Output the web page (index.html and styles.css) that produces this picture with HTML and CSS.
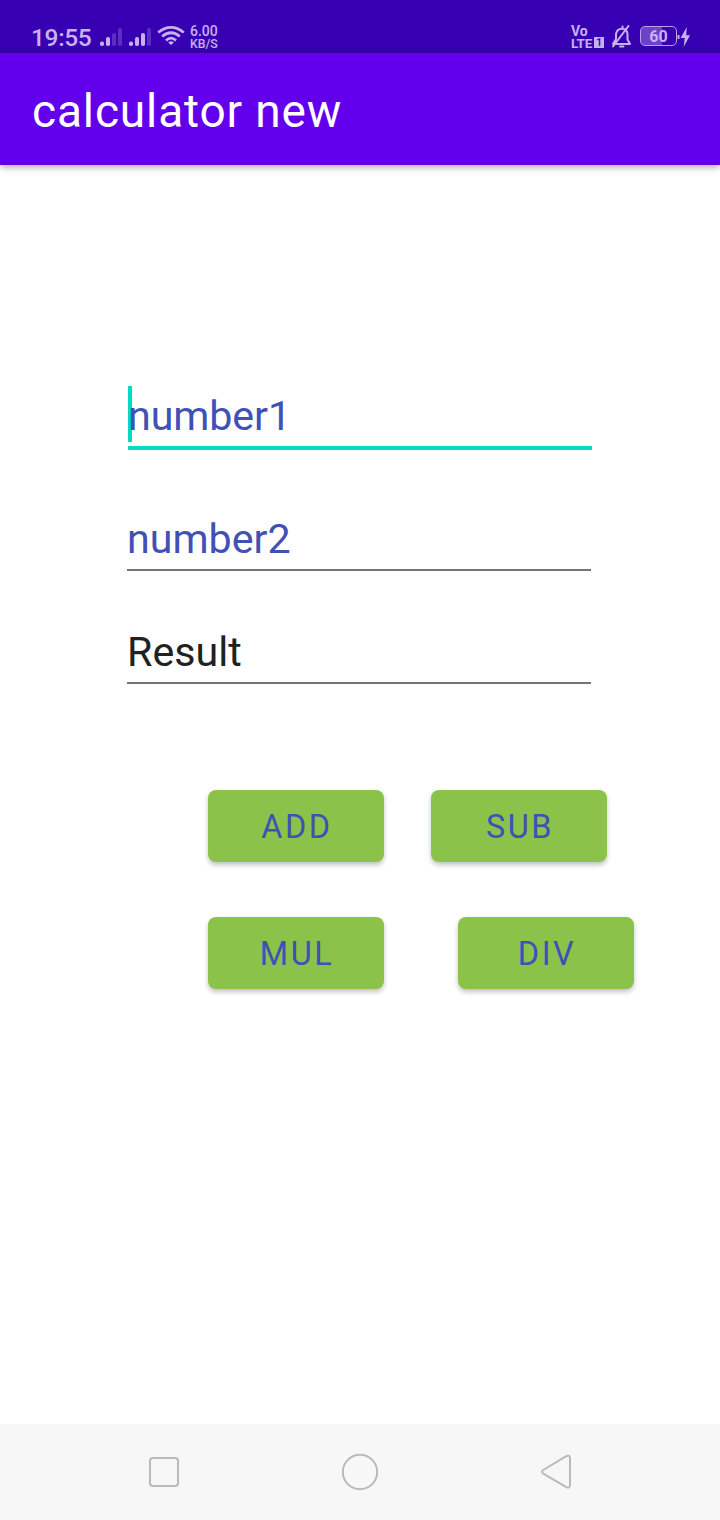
FILE: index.html
```html
<!DOCTYPE html>
<html lang="en">
<head>
<meta charset="utf-8">
<title>calculator new</title>
<link rel="stylesheet" href="styles.css">
</head>
<body>
<div class="screen">
  <header class="status">
    <span class="clock">19:55</span>
    <svg class="signal" width="23" height="19" viewBox="0 0 23 19" fill="currentColor">
      <rect x="0" y="13.5" width="4" height="4.5" rx="1.8"/><rect x="6" y="9" width="4" height="9" rx="1.8"/>
      <g opacity=".25"><rect x="12" y="5" width="4" height="13" rx="1.8"/><rect x="18" y="0" width="4" height="18" rx="1.8"/></g>
    </svg>
    <svg class="signal second" width="23" height="19" viewBox="0 0 23 19" fill="currentColor">
      <rect x="0" y="13.5" width="4" height="4.5" rx="1.8"/><rect x="6" y="9" width="4" height="9" rx="1.8"/><rect x="12" y="5" width="4" height="13" rx="1.8"/>
      <rect x="18" y="0" width="4" height="18" rx="1.8" opacity=".25"/>
    </svg>
    <svg class="wifi" width="28" height="20" viewBox="0 0 28 20" fill="none" stroke="currentColor" stroke-width="2.7">
      <path d="M1.2 6.5Q14-3.7 26.8 6.5M5.2 10.5Q14 3 22.8 10.5M9 14.4Q14 10 19 14.4"/>
      <path d="M11.2 16.4Q14 13.9 16.8 16.4L14 19Z" fill="currentColor" stroke="none"/>
    </svg>
    <span class="speed"><b>6.00</b><b class="unit">KB/S</b></span>
    <span class="volte"><b>Vo</b><span class="lte"><b>LTE</b><span class="sim">1</span></span></span>
    <svg class="bell" width="21" height="23" viewBox="0 0 21 23" fill="none" stroke="currentColor" stroke-width="2" stroke-linejoin="round" stroke-linecap="round">
      <path d="M11.5 1.5V3.5M2 19H19L16.5 14.5V9Q16 3.8 11 3.8T5 9V14ZM9 21.5H12.5M17.5 1L2 21.5"/>
    </svg>
    <span class="battery">60</span>
    <svg class="bolt" width="14" height="20" viewBox="0 0 14 20" fill="currentColor">
      <rect x="0.5" y="8" width="2" height="4"/><path d="M9.8 0L3.6 11H7.7L6.7 20L13 8.3H9.2Z"/>
    </svg>
  </header>
  <h1 class="appbar">calculator new</h1>
  <main class="content">
    <div class="field focused"><span class="caret"></span>number1</div>
    <div class="field second-field">number2</div>
    <div class="field result">Result</div>
    <div class="row"><button class="btn">ADD</button><button class="btn">SUB</button></div>
    <div class="row wide"><button class="btn">MUL</button><button class="btn">DIV</button></div>
  </main>
  <nav class="nav">
    <svg width="32" height="32" viewBox="0 0 32 32"><rect x="2" y="2" width="28" height="28" rx="3"/></svg>
    <svg width="38" height="38" viewBox="0 0 38 38"><circle cx="19" cy="19" r="17.2"/></svg>
    <svg width="34" height="38" viewBox="0 0 34 38"><path d="M4.3 17L27.2 3.2Q31 1.6 31 5V32Q31 35.8 27.2 34.2L4.3 20.6Q1.7 18.8 4.3 17Z"/></svg>
  </nav>
</div>
</body>
</html>
```
FILE: styles.css
```css
* { box-sizing: border-box; }
body { margin: 0; background: #fff; font-family: Roboto, sans-serif; }
.screen { width: 720px; height: 1520px; display: flex; flex-direction: column; }
.status { height: 53px; background: #3700b3; color: #c8b2ee; display: flex; align-items: flex-start; padding-left: 31px; flex: none; }
.status svg { flex: none; }
.clock { width: 69px; font-size: 24.5px; font-weight: 500; line-height: 30px; margin-top: 23px; letter-spacing: -.35px; }
.signal { margin-top: 28px; }
.second { margin-left: 6px; }
.wifi { margin: 26px 0 0 5px; }
.speed { display: flex; flex-direction: column; width: 60px; margin: 25px 0 0 5px; font-size: 14px; line-height: 13px; }
.speed b { font-weight: 500; }
.speed .unit { font-size: 12.3px; }
.volte { display: flex; flex-direction: column; margin: 25px 0 0 auto; width: 34px; font-size: 14px; line-height: 12px; }
.lte { display: flex; font-size: 13.5px; letter-spacing: -.2px; }
.lte b { width: 23px; line-height: 12px; }
.sim { width: 10px; height: 11px; background: currentColor; font-size: 10px; font-weight: 700; letter-spacing: 0; line-height: 11px; text-align: center; -webkit-text-fill-color: #3700b3; }
.bell { margin: 25px 0 0 6px; }
.battery { margin: 26px 0 0 8px; width: 37px; height: 20px; border: 1.5px solid #b9a0e8; border-radius: 5px; font-size: 16px; font-weight: 700; line-height: 20px; text-align: center; background: linear-gradient(90deg, #6a43c8 60%, transparent 60%); }
.bolt { margin: 27px 29px 0 0; }
.appbar { margin: 0; height: 112px; flex: none; background: #6200ee; color: #fff; font-size: 46px; font-weight: 400; line-height: 54px; padding: 31px 0 0 32px; letter-spacing: .87px; box-shadow: 0 2px 7px rgba(0,0,0,.35); }
.content { flex: 1; padding-top: 221px; }
.field { width: 464px; margin-left: 127px; font-size: 41.2px; line-height: 56px; color: #3f51b5; border-bottom: 2px solid #757575; white-space: nowrap; }
.focused { position: relative; height: 64px; margin-left: 128px; padding-top: 2px; border-bottom: 4px solid #03dac5; letter-spacing: -.1px; }
.caret { position: absolute; left: 0; top: 0; width: 4px; height: 56px; background: #03dac5; z-index: -1; }
.second-field { height: 60px; margin-top: 61px; }
.result { height: 60px; margin-top: 53px; color: #212121; }
.row { display: flex; gap: 47px; margin: 106px 0 0 208px; }
.wide { gap: 74px; margin-top: 55px; }
.btn { width: 176px; height: 72px; padding: 2px 0 0 2px; border: 0; border-radius: 8px; background: #8bc34a; color: #3f51b5; font: 400 32.5px/38px Roboto, sans-serif; letter-spacing: 2.5px; box-shadow: 0 3px 5px rgba(0,0,0,.24); }
.nav { height: 96px; background: #f7f7f7; display: flex; align-items: center; justify-content: space-between; padding: 0 147px 0 148px; flex: none; }
.nav svg { fill: none; stroke: #bababa; stroke-width: 2; }
```
